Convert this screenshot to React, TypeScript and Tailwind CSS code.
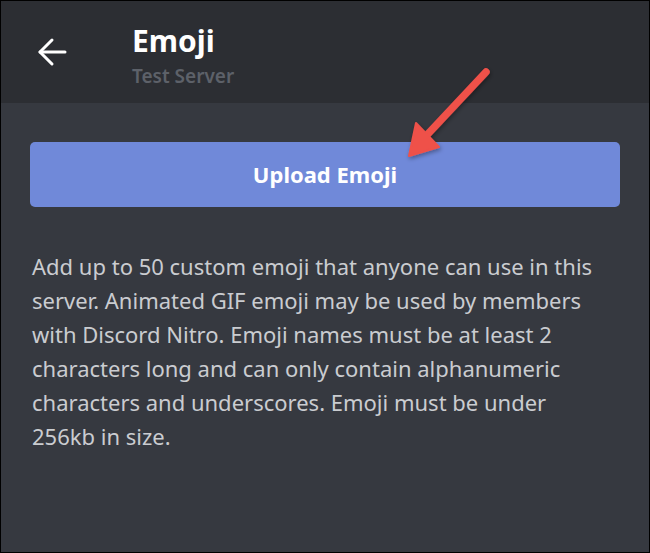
const BackArrow = () => (
  <svg width="30" height="30" viewBox="0 0 30 30" fill="none" stroke="white" strokeWidth="3" strokeLinecap="round" strokeLinejoin="round">
    <path d="M28 15H3" />
    <path d="M15 3L3 15l12 12" />
  </svg>
)

// red annotation arrow pointing at the button
const Pointer = () => (
  <svg className="absolute left-0 top-0 pointer-events-none" width="650" height="553" viewBox="0 0 650 553">
    <defs>
      <filter id="sh" x="-20%" y="-20%" width="140%" height="140%">
        <feDropShadow dx="1" dy="2" stdDeviation="2" floodColor="#000" floodOpacity="0.35" />
      </filter>
    </defs>
    <g filter="url(#sh)" fill="#ef5149" stroke="#ef5149">
      <line x1="485" y1="71" x2="425" y2="135" strokeWidth="7.5" strokeLinecap="round" />
      <polygon points="408,155 415,122 438,146" strokeWidth="2" strokeLinejoin="round" />
    </g>
  </svg>
)

export default function App() {
  return (
    <div
      className="relative w-[650px] h-[553px] overflow-hidden border border-black bg-[#363940]"
      style={{ fontFamily: '"Noto Sans", "Open Sans", sans-serif' }}
    >
      <header className="h-[102px] bg-[#2c2e33] flex items-start">
        <div className="pl-[36px] pt-[36px]">
          <BackArrow />
        </div>
        <div className="pl-[65px] pt-[22px]">
          <h1 className="text-[30px] leading-[36px] font-bold text-white">Emoji</h1>
          <p className="mt-[5px] text-[19px] leading-[24px] font-semibold text-[#5d6169]">Test Server</p>
        </div>
      </header>

      <div className="px-[29px]">
        <button className="mt-[39px] w-full h-[65px] rounded-[5px] bg-[#7089d9] text-white text-[22px] font-bold">
          Upload Emoji
        </button>
        <p className="mt-[42px] pl-[2px] w-[566px] text-[22px] leading-[34px] text-[#caccd0]">
          Add up to 50 custom emoji that anyone can use in this server. Animated GIF emoji may be used by members
          with Discord Nitro. Emoji names must be at least 2 characters long and can only contain alphanumeric
          characters and underscores. Emoji must be under 256kb in size.
        </p>
      </div>

      <Pointer />
    </div>
  )
}
